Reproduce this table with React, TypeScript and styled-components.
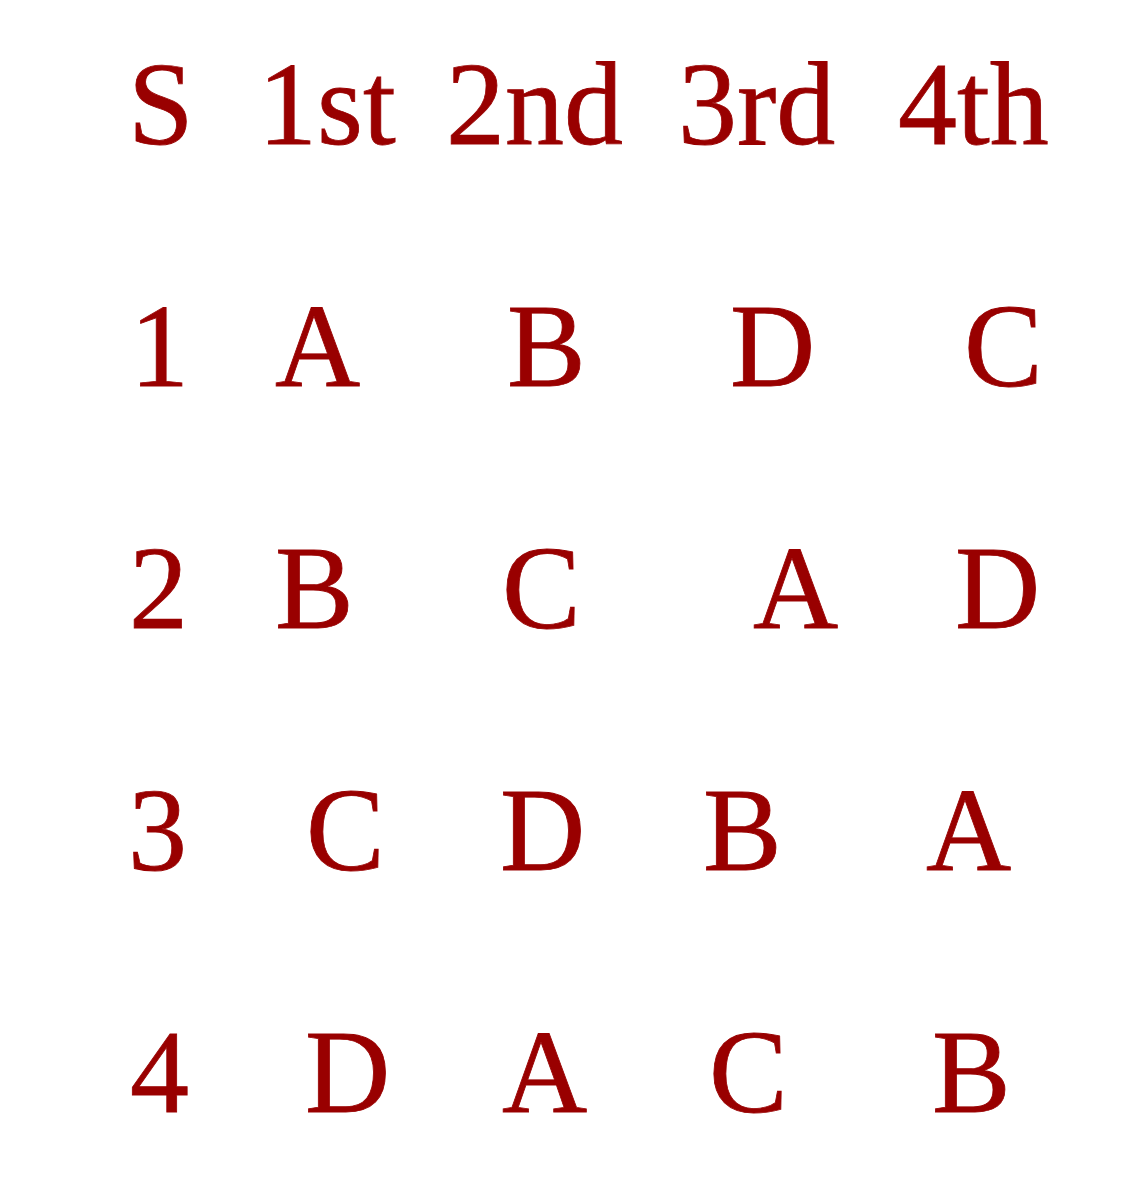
import * as React from "react";
import styled, {createGlobalStyle} from "styled-components";

const GlobalStyle = createGlobalStyle`
    html, body {
        margin: 0;
        padding: 0;
        background: #ffffff;
    }
`;

// each row: [text, shift from the column start in px]
const rows: [string, number][][] = [
    [["S", 8], ["1st", 8], ["2nd", 6], ["3rd", 8], ["4th", 8]],
    [["1", 10], ["A", 25], ["B", 67], ["D", 60], ["C", 74]],
    [["2", 9], ["B", 25], ["C", 62], ["A", 83], ["D", 65]],
    [["3", 8], ["C", 56], ["D", 60], ["B", 33], ["A", 36]],
    [["4", 10], ["D", 55], ["A", 62], ["C", 39], ["B", 42]],
];

export default function App() {
    return (
        <Page>
            <GlobalStyle />
            <Table>
                {rows.map((row, r) =>
                    row.map(([text, shift], c) => (
                        <Cell key={`${r}-${c}`} $shift={shift}>
                            {text}
                        </Cell>
                    ))
                )}
            </Table>
        </Page>
    );
}

const Page = styled.div`
    width: 1148px;
    height: 1200px;
    box-sizing: border-box;
    padding: 45px 0 0 120px;
    background: #ffffff;
`;

const Table = styled.div`
    display: grid;
    grid-template-columns: 130px 190px 230px 220px auto;
    row-gap: 122px;
    font-family: "Liberation Serif", "Times New Roman", serif;
    font-size: 118px;
    line-height: 120px;
    color: #990000;
    -webkit-text-stroke: 0.8px #990000;
    filter: blur(0.6px);
`;

const Cell = styled.div<{$shift: number}>`
    margin-left: ${(p) => p.$shift}px;
    white-space: nowrap;
`;
